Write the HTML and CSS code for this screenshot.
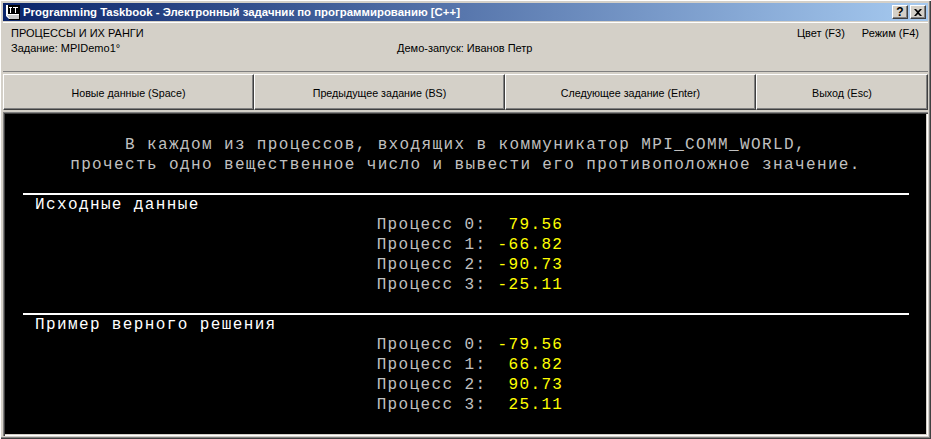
FILE: index.html
```html
<!DOCTYPE html>
<html lang="ru">
<head>
<meta charset="utf-8">
<title>Programming Taskbook</title>
<link rel="stylesheet" href="styles.css">
</head>
<body>
<div class="window">
  <div class="titlebar">
    <svg class="appicon" width="16" height="16" viewBox="0 0 16 16">
      <path d="M1 1h13v14H4L1 12z" fill="#fff"/>
      <path d="M3 1h11v9H3z" fill="#000"/>
      <path d="M4 3h3v1H6v5H5V4H4zM8 3h5v1h-2v5h-1V4H8z" fill="#fff"/>
      <path d="M2 11h12v4H5z" fill="#c8c8c8"/>
      <path d="M14 1h1v15H4v-1h10z" fill="#000"/>
    </svg>
    <span class="title">Programming Taskbook - Электронный задачник по программированию [C++]</span>
    <span class="capbtn help">?</span>
    <span class="capbtn close">
      <svg width="8" height="7" viewBox="0 0 8 7"><path d="M0 0h2l2 2 2-2h2L5 3.500 8 7H6L4 5 2 7H0l3-3.500z" fill="#000"/></svg>
    </span>
  </div>
  <div class="infopanel">
    <div class="inforow">
      <span class="group">ПРОЦЕССЫ И ИХ РАНГИ</span>
      <span class="keys"><span>Цвет (F3)</span><span>Режим (F4)</span></span>
    </div>
    <div class="inforow second">
      <span class="task">Задание: MPIDemo1°</span>
      <span class="demo">Демо-запуск: Иванов Петр</span>
    </div>
  </div>
  <div class="buttons">
    <button class="btn">Новые данные (Space)</button>
    <button class="btn">Предыдущее задание (BS)</button>
    <button class="btn">Следующее задание (Enter)</button>
    <button class="btn last">Выход (Esc)</button>
  </div>
  <div class="console">
    <div class="prompt">В каждом из процессов, входящих в коммуникатор MPI_COMM_WORLD,</div>
    <div class="prompt">прочесть одно вещественное число и вывести его противоположное значение.</div>
    <section class="block">
      <div class="heading">Исходные данные</div>
      <div class="row"><span class="lbl">Процесс 0:</span><span class="val">  79.56</span></div>
      <div class="row"><span class="lbl">Процесс 1:</span><span class="val"> -66.82</span></div>
      <div class="row"><span class="lbl">Процесс 2:</span><span class="val"> -90.73</span></div>
      <div class="row"><span class="lbl">Процесс 3:</span><span class="val"> -25.11</span></div>
    </section>
    <section class="block">
      <div class="heading">Пример верного решения</div>
      <div class="row"><span class="lbl">Процесс 0:</span><span class="val"> -79.56</span></div>
      <div class="row"><span class="lbl">Процесс 1:</span><span class="val">  66.82</span></div>
      <div class="row"><span class="lbl">Процесс 2:</span><span class="val">  90.73</span></div>
      <div class="row"><span class="lbl">Процесс 3:</span><span class="val">  25.11</span></div>
    </section>
  </div>
</div>
</body>
</html>
```
FILE: styles.css
```css
html, body { margin: 0; padding: 0; background: #d4d0c8; }
.window {
  width: 931px; height: 439px; box-sizing: border-box; overflow: hidden;
  background: #d4d0c8; padding: 3px;
  box-shadow: inset 1px 1px 0 #fff, inset -1px -1px 0 #404040, inset -2px -2px 0 #808080;
  display: flex; flex-direction: column;
  font-family: "Liberation Sans", Arial, sans-serif;
  font-size: 11px; color: #000;
}
.titlebar {
  height: 18px; flex: none; display: flex; align-items: center; padding: 0 2px;
  background: linear-gradient(90deg, #0a246a, #a6caf0);
}
.appicon { flex: none; margin-right: 2px; }
.title {
  flex: 1; color: #fff; font-weight: bold; font-size: 11.4px; white-space: nowrap;
  line-height: 14px; margin-top: -1px;
}
.capbtn {
  width: 16px; height: 14px; box-sizing: border-box; background: #d4d0c8;
  display: flex; align-items: center; justify-content: center;
  border: 1px solid; border-color: #fff #404040 #404040 #fff;
  box-shadow: inset -1px -1px 0 #808080;
  font-weight: bold; font-size: 12px; line-height: 12px;
}
.help { margin-right: 2px; }
.infopanel {
  height: 50px; flex: none; box-sizing: border-box; padding: 3px 9px 0 8px;
  margin-top: 1px;
  border-top: 1px solid #fff; border-bottom: 1px solid #808080;
}
.inforow { display: flex; justify-content: space-between; height: 15px; line-height: 14px; }
.second { justify-content: flex-start; }
.task { width: 386px; }
.keys { display: flex; gap: 17px; }
.buttons { display: flex; height: 36px; flex: none; margin-top: 2px; }
.btn {
  flex: none; width: 251px; height: 36px; padding: 1px 0 0; margin: 0; box-sizing: border-box;
  background: #d4d0c8; font: inherit; font-size: 10.7px; color: #000; border-radius: 0;
  border: 1px solid; border-color: #fff #404040 #404040 #fff;
  box-shadow: inset -1px -1px 0 #808080;
}
.last { width: 172px; }
.console {
  height: 324px; flex: none; margin-top: 2px; background: #000; box-sizing: border-box;
  padding: 23px 19px 0 20px;
  box-shadow: inset 1px 1px 0 #808080, inset 2px 2px 0 #404040, inset -1px -1px 0 #fff, inset -2px -2px 0 #d4d0c8;
  font-family: "Liberation Mono", "Courier New", monospace;
  font-size: 16px; letter-spacing: 1.38px; line-height: 20px;
}
.prompt { text-align: center; color: #c0c0c0; height: 20px; white-space: pre; padding-right: 1px; }
.block { border-top: 2px solid #fff; margin-top: 18px; }
.heading { color: #fff; padding-left: 12px; height: 20px; }
.row { text-align: center; height: 20px; white-space: pre; padding-left: 8px; }
.lbl { color: #c0c0c0; }
.val { color: #ffff00; }
```
